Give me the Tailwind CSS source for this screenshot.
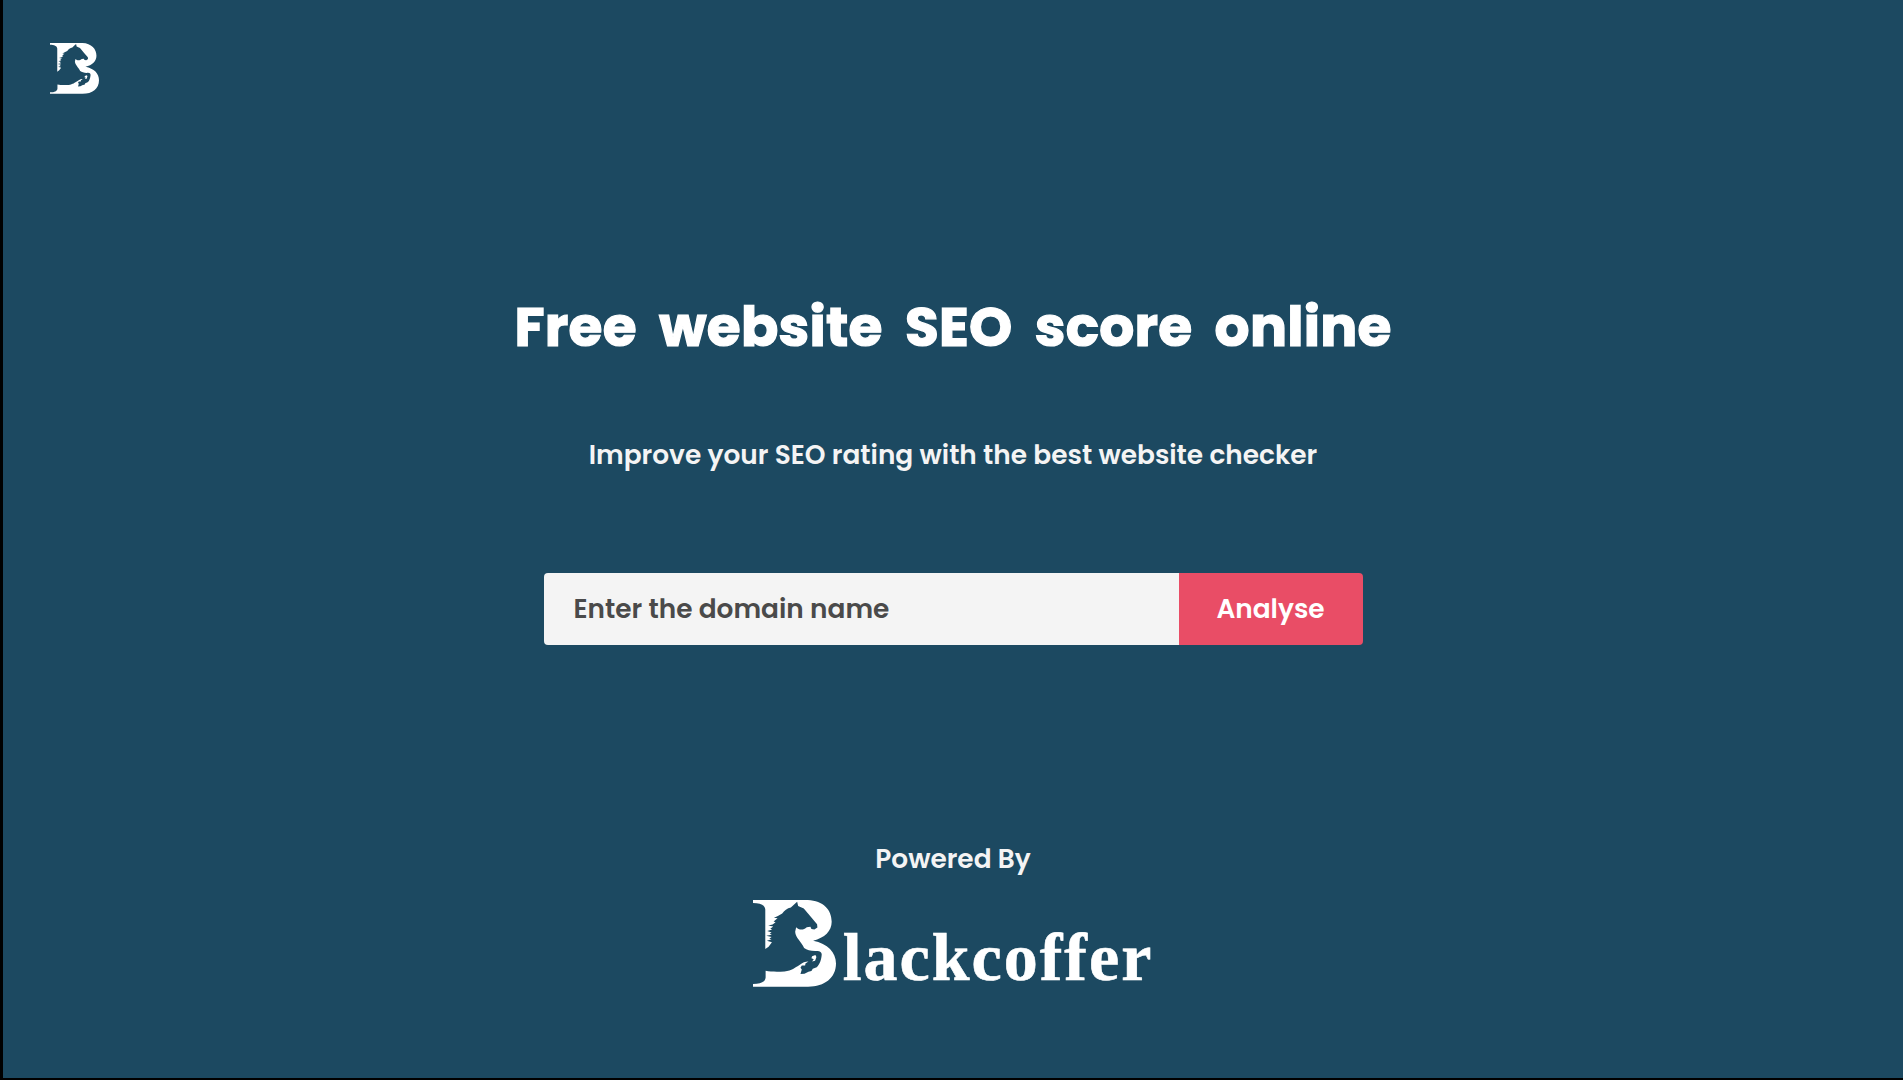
<!DOCTYPE html>
<html lang="en">
<head>
<meta charset="utf-8">
<title>Free website SEO score online</title>
<script src="https://cdn.jsdelivr.net/npm/@tailwindcss/browser@4"></script>
</head>
<body class="h-screen overflow-hidden border-l-[3px] border-b-2 border-black bg-[#1c4961] font-['Poppins',sans-serif]">
<svg class="hidden" aria-hidden="true">
  <symbol id="mark" viewBox="40 43 250 263" preserveAspectRatio="none">
    <path fill="#fff" d="M40 43H205C252 45 277 73 277 109C277 137 256 158 221 166C265 175 290 201 290 235C290 278 256 305 206 305H40V297C64 297 77 290 78 277V257C94 260 113 260 135 259C158 256 166 247 179 240C190 232 197 229 207 229L198 235L197 241L187 241L183 248L187 253L183 267L195 266L207 260L216 258L220 251L232 246C242 238 246 221 247 208C247 201 242 197 234 197C216 198 203 195 194 188C186 170 168 157 167 139L170 125C178 134 192 135 202 125L213 124L216 131L225 132L234 126L233 116L214 94L193 69L176 61L173 48L163 57L154 66C143 68 134 76 128 84L115 91L103 97L114 98L102 108L108 110L99 117L86 120L101 123L92 130L98 132L83 137L96 141L90 145L97 148L80 151L96 155L89 160L96 162L82 166L97 171L87 184L77 191V72C76 57 61 53 40 52Z"/>
    <path fill="#fff" d="M218 213L228 209L231 215L227 227L218 229L223 222L216 219Z"/>
  </symbol>
</svg>
<main class="flex h-full flex-col items-center">
  <header class="w-full pt-[43px] pl-[47px]"><svg class="h-[51px] w-[49px]"><use href="#mark"/></svg></header>
  <h1 class="mt-[199px] h-[68px] text-[55px] leading-[68px] font-bold tracking-[0.25px] whitespace-nowrap text-white [-webkit-text-stroke:1.2px_white] [word-spacing:10.3px]"><span>Free</span> <span>website</span> <span>SEO</span> <span>score</span> <span>online</span></h1>
  <p class="mt-[74px] text-[26.4px] leading-[40px] font-semibold whitespace-nowrap text-[#f4f4f4]">Improve your SEO rating with the best website checker</p>
  <form class="mt-[98px] flex h-[72px] w-[819px] overflow-hidden rounded-[4px] text-[26.4px]">
    <input class="min-w-0 flex-1 bg-[#f4f4f4] pl-[30px] font-semibold outline-none placeholder:text-[#4a4a4a]" placeholder="Enter the domain name">
    <button type="button" class="w-[184px] bg-[#e94d66] font-semibold text-white">Analyse</button>
  </form>
  <p class="mt-[194px] text-[26.4px] leading-[40px] font-semibold text-[#f4f4f4]">Powered By</p>
  <div class="mt-[21px] flex h-[88px]"><svg class="h-[87px] w-[83px]"><use href="#mark"/></svg><span class="ml-[7px] pt-[18px] font-['Liberation_Serif',serif] text-[68px] leading-[78px] font-bold tracking-[2px] text-white [-webkit-text-stroke:0.6px_white]">lackcoffer</span></div>
</main>
</body>
</html>
